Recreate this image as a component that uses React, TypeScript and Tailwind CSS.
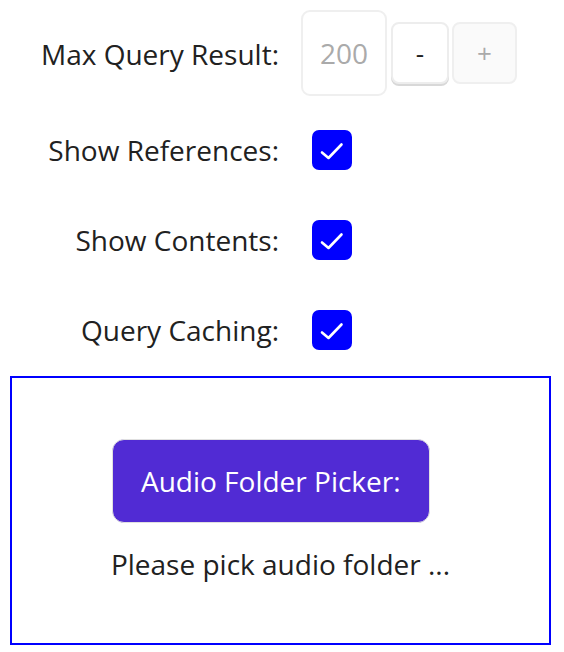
import React from 'react';

const labelCls = 'text-right text-[28px] leading-[42px] text-[#212121] pr-[1px]';

function Check() {
  return (
    <div className="ml-[32px] h-[40px] w-[40px] rounded-[7px] bg-[#0000ff] flex items-center justify-center">
      <svg width="40" height="40" viewBox="0 0 40 40" fill="none">
        <polyline points="10,22.5 16.5,28 29.5,14.5" stroke="white" strokeWidth="2.6" strokeLinecap="round" strokeLinejoin="round" />
      </svg>
    </div>
  );
}

export default function App() {
  const rows = ['Show References:', 'Show Contents:', 'Query Caching:'];

  return (
    <div className="w-[564px] h-[652px] bg-white pt-[10px] font-['Open_Sans',sans-serif]">
      {/* Max query result */}
      <div className="grid grid-cols-[280px_1fr] items-center h-[86px]">
        <div className={`${labelCls} mt-[2px]`}>Max Query Result:</div>
        <div className="flex items-center">
          <div className="ml-[21px] h-[86px] w-[86px] rounded-[9px] border-2 border-[#efefef] flex items-center justify-center text-[28px] text-[#aaaaaa]">
            200
          </div>
          <button className="ml-[4px] h-[62px] w-[58px] rounded-[8px] border-2 border-[#ededed] bg-white shadow-[0_2px_0_#d8d8d8] flex items-center justify-center text-[26px] text-[#212121]">
            -
          </button>
          <button className="ml-[3px] h-[62px] w-[65px] rounded-[8px] border-2 border-[#efefef] bg-[#fafafa] flex items-center justify-center text-[26px] text-[#aaaaaa]">
            +
          </button>
        </div>
      </div>

      {rows.map((r, i) => (
        <div key={r} className={`grid grid-cols-[280px_1fr] items-center h-[40px] ${i === 0 ? 'mt-[33px]' : 'mt-[50px]'}`}>
          <div className={labelCls}>{r}</div>
          <Check />
        </div>
      ))}

      {/* Audio folder */}
      <div className="mt-[27px] ml-[10px] w-[541px] h-[269px] border-2 border-[#0000ff] pt-[61px]">
        <div className="mx-auto w-fit flex flex-col items-start">
          <button className="ml-[1px] h-[84px] px-[28px] rounded-[12px] bg-[#512bd4] border border-[#e0e0e0] text-white text-[28px] leading-[42px]">
            Audio Folder Picker:
          </button>
          <div className="mt-[20px] text-[28px] leading-[42px] text-[#212121]">Please pick audio folder ...</div>
        </div>
      </div>
    </div>
  );
}
